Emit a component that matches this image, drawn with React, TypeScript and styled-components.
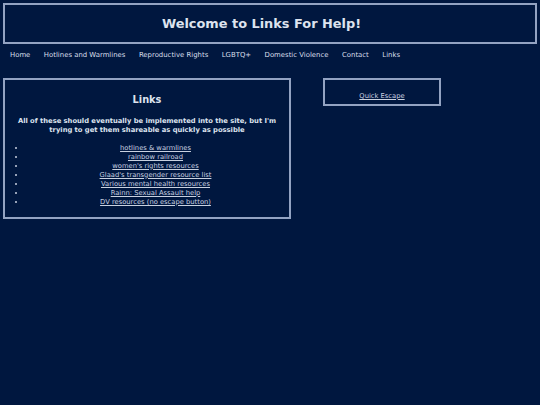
import React from "react";
import styled, { createGlobalStyle } from "styled-components";

const GlobalStyle = createGlobalStyle`
  html, body {
    margin: 0;
    padding: 0;
    background: #00173f;
  }
  body {
    font-family: "DejaVu Sans", Verdana, sans-serif;
    color: #dde3ee;
  }
`;

const Page = styled.div`
  padding: 3px;
  min-height: 399px;
`;

const Header = styled.header`
  border: 2px solid #93a3c2;
  height: 37px;
  display: flex;
  align-items: center;
  justify-content: center;
  padding-right: 17px;
`;

const Title = styled.h1`
  margin: 0;
  font-size: 12.9px;
  font-weight: bold;
  line-height: 14px;
  color: #dde3ee;
`;

const Nav = styled.nav`
  display: flex;
  gap: 13.5px;
  padding: 6px 7px;
`;

const NavItem = styled.a`
  font-size: 6.9px;
  line-height: 10px;
  color: #d8dfeb;
  text-decoration: none;
`;

const Row = styled.div`
  display: flex;
  align-items: flex-start;
  gap: 32px;
  margin-top: 12px;
`;

const Box = styled.section`
  border: 2px solid #93a3c2;
  width: 276px;
  padding: 14px 4px 10.5px;
  text-align: center;
`;

const Heading = styled.h2`
  margin: 0;
  font-size: 9.8px;
  line-height: 12px;
  font-weight: bold;
`;

const Intro = styled.p`
  margin: 10.5px 0 0;
  font-size: 6.75px;
  line-height: 9px;
  font-weight: bold;
`;

const List = styled.ul`
  margin: 9px 0 0;
  padding: 0 0 0 17px;
  list-style: disc;
`;

const Item = styled.li`
  font-size: 6.75px;
  line-height: 9px;
  color: #c9d1e0;
`;

const Link = styled.a`
  color: #c9d1e0;
  text-decoration: underline;
`;

const Escape = styled.div`
  border: 2px solid #93a3c2;
  width: 114px;
  padding: 11.5px 0 3.5px;
  text-align: center;
  font-size: 6.75px;
  line-height: 9px;
`;

const navItems = [
  "Home",
  "Hotlines and Warmlines",
  "Reproductive Rights",
  "LGBTQ+",
  "Domestic Violence",
  "Contact",
  "Links",
];

const links = [
  "hotlines & warmlines",
  "rainbow railroad",
  "women's rights resources",
  "Glaad's transgender resource list",
  "Various mental health resources",
  "Rainn: Sexual Assault help",
  "DV resources (no escape button)",
];

export default function App() {
  return (
    <>
      <GlobalStyle />
      <Page>
        <Header>
          <Title>Welcome to Links For Help!</Title>
        </Header>
        <Nav>
          {navItems.map((n) => (
            <NavItem key={n} href="#">
              {n}
            </NavItem>
          ))}
        </Nav>
        <Row>
          <Box>
            <Heading>Links</Heading>
            <Intro>
              All of these should eventually be implemented into the site, but I'm
              <br />
              trying to get them shareable as quickly as possible
            </Intro>
            <List>
              {links.map((l) => (
                <Item key={l}>
                  <Link href="#">{l}</Link>
                </Item>
              ))}
            </List>
          </Box>
          <Escape>
            <Link href="#">Quick Escape</Link>
          </Escape>
        </Row>
      </Page>
    </>
  );
}
